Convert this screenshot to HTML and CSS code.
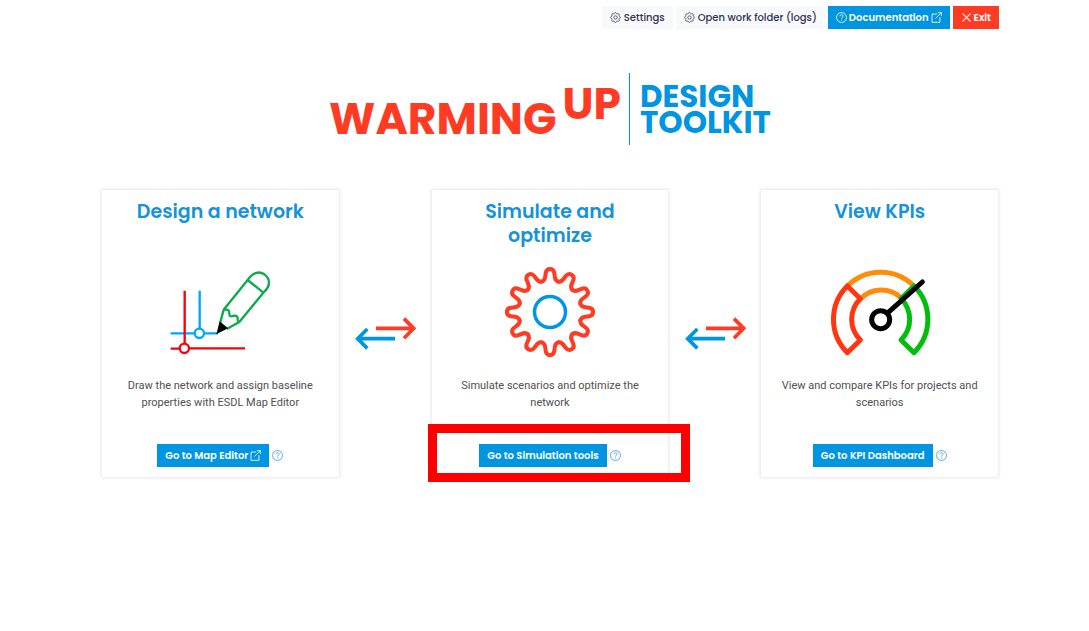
FILE: index.html
```html
<!DOCTYPE html>
<html lang="en">
<head>
<meta charset="utf-8">
<meta name="viewport" content="width=device-width, initial-scale=1">
<title>WarmingUP Design Toolkit</title>
<link rel="stylesheet" href="styles.css">
</head>
<body>
<svg class="sprite" aria-hidden="true">
  <symbol id="gear" viewBox="-1 -1 18 18">
    <circle cx="8" cy="8" r="2.8"/>
    <path d="M9.796 1.343c-.527-1.79-3.065-1.79-3.592 0l-.094.319a.873.873 0 0 1-1.255.52l-.292-.16c-1.64-.892-3.433.902-2.54 2.541l.159.292a.873.873 0 0 1-.52 1.255l-.319.094c-1.79.527-1.79 3.065 0 3.592l.319.094a.873.873 0 0 1 .52 1.255l-.16.292c-.892 1.64.901 3.434 2.541 2.54l.292-.159a.873.873 0 0 1 1.255.52l.094.319c.527 1.79 3.065 1.79 3.592 0l.094-.319a.873.873 0 0 1 1.255-.52l.292.16c1.64.893 3.434-.902 2.54-2.541l-.159-.292a.873.873 0 0 1 .52-1.255l.319-.094c1.79-.527 1.79-3.065 0-3.592l-.319-.094a.873.873 0 0 1-.52-1.255l.16-.292c.893-1.64-.902-3.433-2.541-2.54l-.292.159a.873.873 0 0 1-1.255-.52z"/>
  </symbol>
  <symbol id="help" viewBox="0 0 16 16">
    <circle cx="8" cy="8" r="7.2"/>
    <path d="M5.8 6.2c0-1.500 1-2.300 2.300-2.300s2.200.8 2.200 2c0 1.700-2.200 1.700-2.200 3.600M8.100 11v1.400"/>
  </symbol>
  <symbol id="external" viewBox="0 0 16 16">
    <path d="M9 3H1.500v12H13V7.500M10 1h5v5M15 1 6.500 9.500"/>
  </symbol>
  <symbol id="close" viewBox="0 0 16 16">
    <path d="M2 2l12 12M14 2 2 14"/>
  </symbol>
  <symbol id="swap" viewBox="0 -1 240 150">
    <g fill="none" stroke-width="11">
      <path stroke="#ff3b24" d="M93 57H204M177 28l29 29-29 30"/>
      <path stroke="#0095e1" d="M150 88H40M67 59 38 88l29 29"/>
    </g>
  </symbol>
</svg>

<div class="page">
  <nav class="toolbar" aria-label="Tools">
    <button class="btn btn-light" type="button"><svg class="icon"><use href="#gear"/></svg>Settings</button>
    <button class="btn btn-light" type="button"><svg class="icon"><use href="#gear"/></svg>Open work folder (logs)</button>
    <a class="btn btn-primary" href="#docs"><svg class="icon"><use href="#help"/></svg>Documentation<svg class="icon"><use href="#external"/></svg></a>
    <button class="btn btn-danger" type="button"><svg class="icon icon-close"><use href="#close"/></svg>Exit</button>
  </nav>

  <h1 class="logo">
    <span class="logo-warming">WARMING</span>
    <span class="logo-up">UP</span>
    <span class="logo-product">DESIGN<br>TOOLKIT</span>
  </h1>

  <main class="steps">
    <section class="card">
      <h2 class="card-title">Design a network</h2>
      <div class="card-figure">
        <svg width="140" height="105" viewBox="0 0 420 315" fill="none" stroke-width="7" aria-hidden="true">
          <g stroke="#00a8f0">
            <path d="M149 92V205M62 220H134M163 220H204"/>
            <circle cx="148" cy="220" r="14"/>
          </g>
          <g stroke="#f8000c">
            <path d="M104 92V250M62 266H88M118 265H285"/>
            <circle cx="103" cy="265" r="14"/>
          </g>
          <g stroke="#0cab50" stroke-linejoin="round">
            <path d="M221 149 293 60C307 38 327 32 343 43C361 56 363 78 340 98L268 186L230 207M293 60l47 38M221 149L211 187"/>
            <path d="M221 149c12-2 18 2 17 12c0 8 3 9 10 7c13-3 16 2 15 10c0 5 0 7 5 8"/>
          </g>
          <path fill="#000" d="M209 184l25 21-35 18z"/>
        </svg>
      </div>
      <p class="card-text">Draw the network and assign baseline properties with ESDL Map Editor</p>
      <div class="card-actions">
        <a class="btn btn-primary" href="#map">Go to Map Editor<svg class="icon"><use href="#external"/></svg></a>
        <button class="help" type="button" aria-label="Help on Map Editor"><svg class="icon"><use href="#help"/></svg></button>
      </div>
    </section>

    <svg class="swap" aria-hidden="true"><use href="#swap"/></svg>

    <section class="card card-marked">
      <h2 class="card-title">Simulate and optimize</h2>
      <div class="card-figure">
        <svg width="120" height="110" viewBox="-60 -54 120 110" fill="none" aria-hidden="true">
          <defs>
            <path id="cog" d="M-8.200-30.400C-4.500-31.400-4.900-35-4.300-39C-3.400-44.500 3.400-44.500 4.300-39C4.900-35 4.500-31.400 8.200-30.400"/>
          </defs>
          <g stroke="#ff3b24" stroke-width="4" stroke-linecap="round">
            <use href="#cog"/>
            <use href="#cog" transform="rotate(30)"/>
            <use href="#cog" transform="rotate(60)"/>
            <use href="#cog" transform="rotate(90)"/>
            <use href="#cog" transform="rotate(120)"/>
            <use href="#cog" transform="rotate(150)"/>
            <use href="#cog" transform="rotate(180)"/>
            <use href="#cog" transform="rotate(210)"/>
            <use href="#cog" transform="rotate(240)"/>
            <use href="#cog" transform="rotate(270)"/>
            <use href="#cog" transform="rotate(300)"/>
            <use href="#cog" transform="rotate(330)"/>
          </g>
          <circle r="15.500" stroke="#0095e9" stroke-width="3.500"/>
        </svg>
      </div>
      <p class="card-text">Simulate scenarios and optimize the network</p>
      <div class="card-actions">
        <a class="btn btn-primary" href="#simulation">Go to Simulation tools</a>
        <button class="help" type="button" aria-label="Help on Simulation tools"><svg class="icon"><use href="#help"/></svg></button>
      </div>
    </section>

    <svg class="swap" aria-hidden="true"><use href="#swap"/></svg>

    <section class="card">
      <h2 class="card-title">View KPIs</h2>
      <div class="card-figure">
        <svg width="120" height="105" viewBox="0 0 360 315" fill="none" stroke-width="15" stroke-linejoin="round" aria-hidden="true">
          <path stroke="#ff8c0a" d="M82 78A141 141 0 0 1 282 78M122 116A87 87 0 0 1 242 112"/>
          <path stroke="#ff3610" d="M82 78A141 141 0 0 0 82 278L121 240A87 87 0 0 1 121 116Z"/>
          <path stroke="#00be0a" d="M282 78A141 141 0 0 1 282 278L243 240A87 87 0 0 0 243 116Z"/>
          <g stroke="#000">
            <path stroke-linecap="round" d="M204 158 307 66"/>
            <circle cx="182" cy="179" r="27" fill="#fff"/>
          </g>
        </svg>
      </div>
      <p class="card-text">View and compare KPIs for projects and scenarios</p>
      <div class="card-actions">
        <a class="btn btn-primary" href="#kpi">Go to KPI Dashboard</a>
        <button class="help" type="button" aria-label="Help on KPI Dashboard"><svg class="icon"><use href="#help"/></svg></button>
      </div>
    </section>
  </main>
</div>
</body>
</html>
```

FILE: styles.css
```css
* {
  box-sizing: border-box;
}

body {
  margin: 0;
  background: #fff;
  color: #505050;
  font-family: Poppins, Inter, sans-serif;
}

.sprite {
  display: none;
}

.page {
  padding: 6px 90px 24px 101px;
}

.toolbar {
  display: flex;
  justify-content: flex-end;
  gap: 3px;
}

.btn {
  display: inline-flex;
  align-items: center;
  gap: 2px;
  height: 23px;
  padding: 0 8px;
  border: 0;
  font: 600 10px/15px Poppins, Inter, sans-serif;
  white-space: nowrap;
  text-decoration: none;
  cursor: pointer;
}

.btn-light {
  gap: 3px;
  background: #f8f9fb;
  color: #30304f;
  font-weight: 500;
}

.btn-primary {
  background: #0095e1;
  color: #fff;
}

.btn-danger {
  background: #ff3b24;
  color: #fff;
}

.icon {
  display: block;
  width: 11px;
  height: 11px;
  fill: none;
  stroke: currentColor;
  stroke-width: 1.2;
}

.icon-close {
  stroke-width: 1.6;
}

.logo {
  display: flex;
  justify-content: center;
  align-items: center;
  height: 72px;
  margin: 44px 0;
  color: #ff3b24;
  font-size: 44px;
  font-weight: 700;
  line-height: 44px;
}

.logo-warming {
  padding-top: 20px;
}

.logo-up {
  margin-left: 6px;
  padding-bottom: 11px;
}

.logo-product {
  display: flex;
  align-items: center;
  height: 72px;
  margin-left: 8px;
  padding-left: 10px;
  border-left: 1px solid #0095e1;
  color: #0095e1;
  font-size: 31px;
  line-height: 26px;
}

.steps {
  display: grid;
  grid-template-columns: 1fr 91px 1fr 91px 1fr;
  align-items: center;
}

.card {
  position: relative;
  align-self: stretch;
  display: flex;
  flex-direction: column;
  padding: 10px 20px;
  border: 1px solid #f0f0f0;
  box-shadow: 0 0 3px #e8e8e8;
  text-align: center;
}

.card-title {
  min-height: 48px;
  margin: 0;
  color: #1592dc;
  font-size: 19px;
  font-weight: 600;
  line-height: 24px;
}

.card-figure {
  display: flex;
  justify-content: center;
  align-items: center;
  height: 129px;
}

.card-text {
  margin: 0 0 33px;
  font: 11px/17px Roboto, sans-serif;
}

.card-actions {
  display: flex;
  justify-content: center;
  align-items: center;
  gap: 3px;
  margin-top: auto;
}

.help {
  padding: 0;
  border: 0;
  background: none;
  color: #3c9be6;
  cursor: pointer;
}

.swap {
  justify-self: center;
  width: 80px;
  height: 50px;
}

.card-marked::after {
  content: "";
  position: absolute;
  top: 234px;
  right: -22px;
  bottom: -5px;
  left: -4px;
  border: 9px solid #f00;
  pointer-events: none;
}
```
